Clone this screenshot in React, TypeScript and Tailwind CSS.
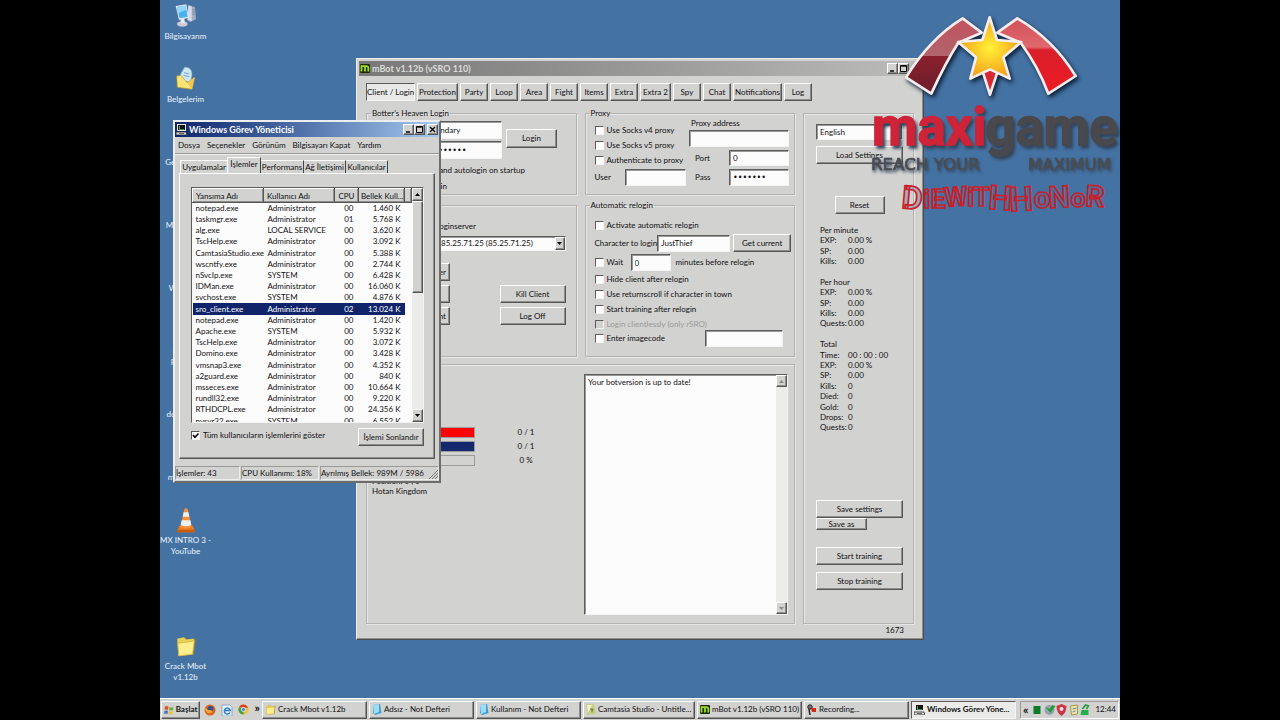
import type { ReactNode } from "react";
import clsx from "clsx";

const raised =
  "border border-t-white border-l-white border-r-[#555] border-b-[#555] bg-[#d2d2d0] shadow-[inset_-1px_-1px_0_#8e8e8c]";
const sunken =
  "border border-t-[#5c5c5c] border-l-[#5c5c5c] border-r-[#f4f4f4] border-b-[#f4f4f4]";
const field = `${sunken} min-w-0 bg-[#fdfcfd] px-[3px] outline-none shadow-[inset_1px_1px_0_#9a9a9a]`;
const group = "min-w-0 border border-[#b2b2b0] shadow-[inset_1px_1px_0_#e6e6e4,1px_1px_0_#e6e6e4]";

const processes = [
  ["notepad.exe", "Administrator", "00", "1.460 K"],
  ["taskmgr.exe", "Administrator", "01", "5.768 K"],
  ["alg.exe", "LOCAL SERVICE", "00", "3.620 K"],
  ["TscHelp.exe", "Administrator", "00", "3.092 K"],
  ["CamtasiaStudio.exe", "Administrator", "00", "5.388 K"],
  ["wscntfy.exe", "Administrator", "00", "2.744 K"],
  ["nSvcIp.exe", "SYSTEM", "00", "6.428 K"],
  ["IDMan.exe", "Administrator", "00", "16.060 K"],
  ["svchost.exe", "SYSTEM", "00", "4.876 K"],
  ["sro_client.exe", "Administrator", "02", "13.024 K"],
  ["notepad.exe", "Administrator", "00", "1.420 K"],
  ["Apache.exe", "SYSTEM", "00", "5.932 K"],
  ["TscHelp.exe", "Administrator", "00", "3.072 K"],
  ["Domino.exe", "Administrator", "00", "3.428 K"],
  ["vmsnap3.exe", "Administrator", "00", "4.352 K"],
  ["a2guard.exe", "Administrator", "00", "840 K"],
  ["msseces.exe", "Administrator", "00", "10.664 K"],
  ["rundll32.exe", "Administrator", "00", "9.220 K"],
  ["RTHDCPL.exe", "Administrator", "00", "24.356 K"],
  ["nvsvr32.exe", "SYSTEM", "00", "6.552 K"],
];

const botTabs = [
  { name: "Client / Login", width: "w-[49px]" },
  { name: "Protection", width: "w-[41px]" },
  { name: "Party", width: "w-[28px]" },
  { name: "Loop", width: "w-[28px]" },
  { name: "Area", width: "w-[28px]" },
  { name: "Fight", width: "w-[28px]" },
  { name: "Items", width: "w-[28px]" },
  { name: "Extra", width: "w-[28px]" },
  { name: "Extra 2", width: "w-[31px]" },
  { name: "Spy", width: "w-[28px]" },
  { name: "Chat", width: "w-[28px]" },
  { name: "Notifications", width: "w-[49px]" },
  { name: "Log", width: "w-[28px]" },
];

const stats = [
  ["Per minute", ""],
  ["EXP:", "0.00 %"],
  ["SP:", "0.00"],
  ["Kills:", "0.00"],
  ["", ""],
  ["Per hour", ""],
  ["EXP:", "0.00 %"],
  ["SP:", "0.00"],
  ["Kills:", "0.00"],
  ["Quests:", "0.00"],
  ["", ""],
  ["Total", ""],
  ["Time:", "00 : 00 : 00"],
  ["EXP:", "0.00 %"],
  ["SP:", "0.00"],
  ["Kills:", "0"],
  ["Died:", "0"],
  ["Gold:", "0"],
  ["Drops:", "0"],
  ["Quests:", "0"],
];

const Arrow = ({ up, muted }: { up?: boolean; muted?: boolean }) => (
  <svg viewBox="0 0 5 3" className={clsx("w-[5px] h-[3px]", up && "rotate-180", muted ? "fill-[#888]" : "fill-black")}>
    <path d="M0 0h5L2.5 3z" />
  </svg>
);

const Button = ({ children, className }: { children?: ReactNode; className?: string }) => (
  <button className={clsx(raised, "flex items-center justify-center whitespace-nowrap", className)}>{children}</button>
);

const Check = ({ label, checked, disabled }: { label: string; checked?: boolean; disabled?: boolean }) => (
  <label className={clsx("relative flex items-center gap-[3px] whitespace-nowrap", disabled && "text-[#9a9a98]")}>
    <input
      type="checkbox"
      defaultChecked={checked}
      disabled={disabled}
      className={clsx(sunken, "peer size-[9px] appearance-none shrink-0", disabled ? "bg-[#d2d2d0]" : "bg-white")}
    />
    <svg viewBox="0 0 9 9" className="hidden peer-checked:block absolute left-0 size-[9px] fill-none stroke-black">
      <path d="M2 4l2 2.3L7.5 2.5" strokeWidth="1.5" />
    </svg>
    {label}
  </label>
);

const Select = ({ label, value, className }: { label: string; value: string; className?: string }) => (
  <div className={clsx("relative", className)}>
    <select aria-label={label} className={clsx(field, "appearance-none w-full h-full")}>
      <option>{value}</option>
    </select>
    <span className={clsx(raised, "pointer-events-none absolute right-[1px] inset-y-[1px] w-[10px] flex items-center justify-center")}>
      <Arrow />
    </span>
  </div>
);

const MBotIcon = () => (
  <svg viewBox="0 0 10 9" className="w-[10px] h-[9px] shrink-0">
    <rect width="10" height="9" rx="1" fill="#1f2a08" />
    <path d="M1.5 7.5V2.2h5a1.8 1.8 0 0 1 1.8 1.8v3.5M5 2.5v5" fill="none" stroke="#9be022" strokeWidth="1.8" />
  </svg>
);

const MonitorIcon = () => (
  <svg viewBox="0 0 11 11" className="size-[11px] shrink-0">
    <path d="M1 0h9v7H1z" fill="#e8e8e4" />
    <path d="M2 1h7v5H2z" fill="#111" />
    <path d="M3 2h1v3h4v.8H3z" fill="#3fae62" />
    <path d="M0 8h10l1 3H0z" fill="#dcdcd8" stroke="#222" strokeWidth=".8" />
    <path d="M3 9.5h5" stroke="#444" strokeWidth=".8" />
  </svg>
);

const FolderIcon = ({ className }: { className: string }) => (
  <svg viewBox="0 0 20 20" className={className}>
    <path d="M3 4l6-2 2 2 7-1 1 2-2 13-13 1z" fill="#8b8140" />
    <path d="M2 3.5l6-1.5 2 2 7-.5.5 2-1.500 12-13 1.500z" fill="#ecd055" />
    <path d="M2.5 7.5l15-2-1.5 12-12.5 1.5z" fill="#fdf08c" stroke="#c9ae48" strokeWidth=".7" />
  </svg>
);

const ComputerIcon = () => (
  <svg viewBox="0 0 66 72" className="w-[22px] h-[24px]">
    <path d="M40 4l20 6 3 36-18 8-8-6z" fill="#a7abc4" />
    <path d="M40 4l10 3v45l-12-4z" fill="#d8dbea" />
    <path d="M52 16l8 2M52 23l8 1M52 30l8 1" stroke="#6f7494" strokeWidth="2" />
    <path d="M2 6l32-5 8 40-30 7z" fill="#dfe6f4" />
    <path d="M6 9l26-4 6 33-24 5z" fill="#47b0ef" />
    <path d="M6 9l26-4 2 12L9 28z" fill="#8fd6fa" />
    <ellipse cx="22" cy="60" rx="16" ry="8" fill="#cfc9d6" />
    <path d="M16 46l12-2 2 14H18z" fill="#e9e9f2" />
  </svg>
);

const DocumentsIcon = () => (
  <svg viewBox="0 0 60 78" className="w-[20px] h-[26px]">
    <path d="M26 4q20-2 22 20l-4 24-32-4 2-20z" fill="#cfe6f4" stroke="#8ab3cb" strokeWidth="2" />
    <path d="M24 20l16 4M22 28l18 4" stroke="#6ea9cf" strokeWidth="3" />
    <path d="M2 30l12-2 20 22 22-16-8 36-44-6z" fill="#f9e373" stroke="#b29637" strokeWidth="2" />
    <path d="M34 50l22-16-8 36z" fill="#efc94f" />
  </svg>
);

const ConeIcon = () => (
  <svg viewBox="0 0 54 78" className="w-[18px] h-[26px]">
    <path d="M6 56h42l6 20H0z" fill="#ee7d1a" />
    <path d="M22 6q5-4 10 0l12 54q-17 10-34 0z" fill="#f5923a" />
    <path d="M20 16h14l3 13H17zM14 40h26l3 14q-16 8-32 0z" fill="#eef0f0" />
    <path d="M0 76l3-8h48l3 8z" fill="#c95a0c" />
  </svg>
);

const NoteIcon = () => (
  <svg viewBox="0 0 10 11" className="w-[10px] h-[11px] shrink-0">
    <path d="M1 1l7-1 1.500 9L3 11 1 9z" fill="#3f9fd0" />
    <path d="M1 1l6-1v8l-5 2z" fill="#9fdcf3" />
  </svg>
);

const CamtasiaIcon = () => (
  <svg viewBox="0 0 10 11" className="w-[10px] h-[11px] shrink-0">
    <path d="M0 0h8l2 10-9 1z" fill="#c5cf86" />
    <path d="M1 1h5L2 9z" fill="#f2f4cf" />
    <path d="M4 4l4 1-2 4z" fill="#7f9448" />
  </svg>
);

const RecordIcon = () => (
  <svg viewBox="0 0 10 11" className="w-[10px] h-[11px] shrink-0">
    <circle cx="3" cy="3" r="2.200" fill="#777" stroke="#222" />
    <path d="M2 5l1 6" stroke="#222" strokeWidth="1.500" />
    <path d="M4 4h5v4H5z" fill="#cf2b1d" />
  </svg>
);

const desktopIcons: { label: string; icon?: ReactNode }[] = [
  { label: "Bilgisayarım", icon: <ComputerIcon /> },
  { label: "Belgelerim", icon: <DocumentsIcon /> },
  { label: "Genel Ağlar" },
  { label: "Mozilla Fox" },
  { label: "Windows Media" },
  { label: "Mx Bot Program" },
  { label: "downloads" },
  { label: "maxigame" },
  { label: "MX INTRO 3 - YouTube", icon: <ConeIcon /> },
  { label: "" },
  { label: "Crack Mbot v1.12b", icon: <FolderIcon className="size-[22px]" /> },
];

const DesktopIcons = () => (
  <ul className="grid auto-rows-[63px] w-[51px] pt-[2px] text-[#eef4fb]">
    {desktopIcons.map(({ label, icon }, i) => (
      <li key={i} className="flex flex-col items-center gap-[2px] text-center">
        <span className="h-[27px] shrink-0 flex items-center">{icon}</span>
        {label}
      </li>
    ))}
  </ul>
);

const WindowButtons = ({ close }: { close?: boolean }) => (
  <div className="ml-auto flex">
    <Button className="w-[11px] h-[11px]">
      <svg viewBox="0 0 9 9" className="size-[9px]"><path d="M2 7h4" stroke="#000" strokeWidth="1.500" /></svg>
    </Button>
    <Button className="w-[11px] h-[11px]">
      <svg viewBox="0 0 9 9" className="size-[9px]"><path d="M1.500 1.500h6v6h-6zM1.500 2.200h6" fill="none" stroke="#000" /></svg>
    </Button>
    {close && (
      <Button className="ml-[2px] w-[11px] h-[11px]">
        <svg viewBox="0 0 9 9" className="size-[9px]"><path d="M2 2l5 5M7 2l-5 5" stroke="#000" strokeWidth="1.400" /></svg>
      </Button>
    )}
  </div>
);

const LoginGroup = () => (
  <fieldset className={clsx(group, "h-[87px] px-[4px]")}>
    <legend className="px-[1px] leading-[10px]">Botter's Heaven Login</legend>
    <div className="mt-[3px] flex">
      <div className="w-[131px] flex flex-col gap-[2px]">
        <label className="flex items-center">
          <span className="w-[49px]">Username</span>
          <input className={clsx(field, "flex-1 h-[18px]")} defaultValue="Legendary" />
        </label>
        <label className="flex items-center">
          <span className="w-[49px]">Password</span>
          <input type="password" className={clsx(field, "flex-1 h-[18px] font-['DejaVu_Sans',sans-serif]")} defaultValue="123456789" />
        </label>
      </div>
      <Button className="ml-1 mt-[8px] w-[51px] h-[19px]">Login</Button>
    </div>
    <div className="mt-[3px] flex flex-col">
      <div className="h-[16px] w-[154px] flex items-center justify-end"><Check label="Save logins and autologin on startup" /></div>
      <div className="h-[16px] w-[76px] flex items-center justify-end"><Check label="Autorelogin" /></div>
    </div>
  </fieldset>
);

const ServerGroup = () => (
  <div className={clsx(group, "mt-[5px] h-[152px] px-[10px] pt-[15px]")}>
    <div className="w-[99px] text-right leading-[10px]">Select loginserver</div>
    <Select label="Loginserver" value="85.25.71.25 (85.25.71.25)" className="mt-[5px] ml-[60px] h-[15px]" />
    <div className="mt-[12px] grid grid-cols-[73px_66px] justify-between gap-y-1">
      <Button className="h-[18px] !justify-end pr-[3px]">Start loader</Button>
      <span />
      <Button className="h-[18px]">Start</Button>
      <Button className="h-[18px]">Kill Client</Button>
      <Button className="h-[18px] !justify-end pr-[3px]">Start client</Button>
      <Button className="h-[18px]">Log Off</Button>
    </div>
  </div>
);

const ProxyGroup = () => (
  <fieldset className={clsx(group, "h-[87px] pl-[9px] pr-[5px]")}>
    <legend className="-ml-[5px] px-[1px] leading-[10px]">Proxy</legend>
    <div className="flex justify-between">
      <div className="w-[91px] pt-[5px]">
        {["Use Socks v4 proxy", "Use Socks v5 proxy", "Authenticate to proxy"].map((label) => (
          <div key={label} className="h-[15px] flex items-center"><Check label={label} /></div>
        ))}
        <label className="mt-[1px] flex items-center justify-between">
          User
          <input className={clsx(field, "w-[61px] h-[17px]")} />
        </label>
      </div>
      <div className="w-[100px]">
        <label htmlFor="proxy-address" className="block px-[2px] leading-[10px]">Proxy address</label>
        <input id="proxy-address" className={clsx(field, "mt-[2px] block w-full h-[17px]")} />
        <label className="mt-[3px] pl-[6px] flex items-center justify-between">
          Port
          <input className={clsx(field, "w-[60px] h-[16px]")} defaultValue="0" />
        </label>
        <label className="mt-[3px] pl-[6px] flex items-center justify-between">
          Pass
          <input type="password" className={clsx(field, "w-[60px] h-[17px] font-['DejaVu_Sans',sans-serif]")} defaultValue="1234567" />
        </label>
      </div>
    </div>
  </fieldset>
);

const ReloginGroup = () => (
  <fieldset className={clsx(group, "h-[157px] pl-[9px] pr-[3px]")}>
    <legend className="-ml-[5px] px-[1px] leading-[10px]">Automatic relogin</legend>
    <div className="mt-[8px] h-[15px] flex items-center"><Check label="Activate automatic relogin" /></div>
    <div className="mt-[1px] flex items-center">
      <label className="flex flex-1 items-center justify-between whitespace-nowrap">
        Character to login
        <input className={clsx(field, "w-[73px] h-[17px]")} defaultValue="JustThief" />
      </label>
      <Button className="ml-[3px] w-[60px] h-[18px]">Get current</Button>
    </div>
    <div className="mt-[2px] flex items-center">
      <div className="w-[36px]"><Check label="Wait" /></div>
      <input id="wait" aria-label="Minutes to wait" className={clsx(field, "w-[40px] h-[17px]")} defaultValue="0" />
      <label htmlFor="wait" className="ml-[5px]">minutes before relogin</label>
    </div>
    <div className="mt-[1px] h-[15px] flex items-center"><Check label="Hide client after relogin" /></div>
    <div className="h-[15px] flex items-center"><Check label="Use returnscroll if character in town" /></div>
    <div className="h-[15px] flex items-center"><Check label="Start training after relogin" /></div>
    <div className="h-[14px] flex items-center"><Check label="Login clientlessly (only rSRO)" disabled /></div>
    <div className="h-[15px] flex items-center justify-between">
      <Check label="Enter imagecode" />
      <input aria-label="Imagecode" className={clsx(field, "mr-[8px] w-[78px] h-[17px]")} />
    </div>
  </fieldset>
);

const Bar = ({ color, text }: { color: string; text: string }) => (
  <div className="flex h-[14px] items-center">
    <div className={clsx("w-[103px] h-[11px] border border-[#9a9a98]", color)} />
    <span className="w-[102px] text-center">{text}</span>
  </div>
);

const LogGroup = () => (
  <div className={clsx(group, "mt-[7px] h-[260px] flex justify-between pl-[5px] pr-[6px] pt-[9px]")}>
    <div className="pt-[51px]">
      <Bar color="bg-[#fb0404]" text="0 / 1" />
      <Bar color="bg-[#14286e]" text="0 / 1" />
      <Bar color="bg-[#d2d2d0]" text="0 %" />
      <div className="mt-[9px] leading-[10px]">Position: 0 , 0</div>
      <div className="leading-[10px]">Hotan Kingdom</div>
    </div>
    <div className={clsx(sunken, "flex w-[204px] h-[241px] bg-[#fdfcfd] shadow-[inset_1px_1px_0_#9a9a9a]")}>
      <textarea
        aria-label="Messages"
        className="flex-1 resize-none overflow-hidden px-[3px] pt-[2px] leading-[11px] outline-none"
        defaultValue="Your botversion is up to date!"
      />
      <div className="flex w-[11px] flex-col justify-between bg-[#ececea]">
        <Button className="h-[12px]"><Arrow up muted /></Button>
        <Button className="h-[12px]"><Arrow muted /></Button>
      </div>
    </div>
  </div>
);

const SidePanel = () => (
  <div className={clsx(group, "mt-[5px] flex w-[111px] flex-col pl-[12px] pr-[10px] pt-[10px]")}>
    <Select label="Language" value="English" className="h-[16px]" />
    <Button className="mt-[6px] h-[18px]">Load Settings</Button>
    <Button className="mt-[32px] w-[50px] h-[18px] self-center">Reset</Button>
    <dl className="mt-[11px] grid h-[208px] auto-rows-fr pl-1">
      {stats.map(([name, value], i) => (
        <div key={i} className="flex items-center whitespace-nowrap">
          <dt className="w-[28px]">{name}</dt>
          <dd>{value}</dd>
        </div>
      ))}
    </dl>
    <Button className="mt-[67px] h-[18px]">Save settings</Button>
    <Button className="h-[12px] w-[51px]">Save as</Button>
    <Button className="mt-[17px] h-[18px]">Start training</Button>
    <Button className="mt-[7px] h-[18px]">Stop training</Button>
  </div>
);

const BotWindow = () => (
  <section className="absolute left-[196px] top-[58px] w-[568px] border border-t-[#eee] border-l-[#eee] border-r-[#4c4c4c] border-b-[#4c4c4c] bg-[#d2d2d0] p-[2px] shadow-[inset_-1px_-1px_0_#8e8e8c]">
    <header className="flex h-[15px] items-center gap-[2px] bg-linear-to-r from-[#787878] to-[#bcbcba] px-[1px] text-[9px] font-bold text-[#dcdcda]">
      <MBotIcon />
      <span>mBot v1.12b (vSRO 110)</span>
      <div className="ml-auto mr-[11px] flex font-normal"><WindowButtons /></div>
    </header>
    <div className="px-[7px]">
      <nav className="mt-[7px] flex gap-[2px]">
        {botTabs.map(({ name, width }, i) =>
          i === 0 ? (
            <button key={name} className={clsx(sunken, width, "h-[18px] whitespace-nowrap bg-[#e9e9e7]")}>{name}</button>
          ) : (
            <Button key={name} className={clsx("h-[18px]", width)}>{name}</Button>
          )
        )}
      </nav>
      <div className="mt-[7px] flex gap-2">
        <div className="flex-1">
          <div className="grid grid-cols-2 gap-x-2 gap-y-[5px]">
            <LoginGroup />
            <ProxyGroup />
            <ServerGroup />
            <ReloginGroup />
          </div>
          <LogGroup />
        </div>
        <SidePanel />
      </div>
      <footer className="pr-[10px] text-right leading-[13px]">1673</footer>
    </div>
  </section>
);

const ProcessTable = () => (
  <div className={clsx(sunken, "flex h-[236px] overflow-hidden bg-[#fdfcfd]")}>
    <div className="flex-1">
      <table className="w-full table-fixed">
        <thead>
          <tr className="h-[14px] text-left leading-[12px] whitespace-nowrap">
            <th className={clsx(raised, "w-[71px] pl-[3px] font-normal")}>Yansıma Adı</th>
            <th className={clsx(raised, "w-[71px] pl-[3px] font-normal")}>Kullanıcı Adı</th>
            <th className={clsx(raised, "w-[24px] text-center font-normal")}>CPU</th>
            <th className={clsx(raised, "w-[46px] pl-[2px] font-normal")}>Bellek Kull...</th>
            <th className={raised} />
          </tr>
        </thead>
        <tbody>
          {processes.map(([name, user, cpu, memory], i) => (
            <tr key={i} className="h-[11px] leading-[11px] whitespace-nowrap nth-[5n]:leading-[12px]">
              <td className={clsx("pl-[3px]", i === 9 && "bg-[#10246a] text-white")}>{name}</td>
              <td className={clsx("pl-[4px]", i === 9 && "bg-[#10246a] text-white")}>{user}</td>
              <td className={clsx("pr-[5px] text-right", i === 9 && "bg-[#10246a] text-white")}>{cpu}</td>
              <td className={clsx("pr-1 text-right", i === 9 && "bg-[#10246a] text-white")}>{memory}</td>
              <td />
            </tr>
          ))}
        </tbody>
      </table>
    </div>
    <div className="flex w-[11px] flex-col bg-[#ebebe9]">
      <Button className="h-[13px] shrink-0"><Arrow up /></Button>
      <div className={clsx(raised, "h-[92px]")} />
      <Button className="mt-auto h-[13px] shrink-0"><Arrow /></Button>
    </div>
  </div>
);

const TaskManager = () => (
  <section className="absolute left-[13px] top-[120px] w-[268px] border-2 border-t-[#eee] border-l-[#eee] border-r-[#6c6c6a] border-b-[#6c6c6a] bg-[#d2d2d0]">
    <header className="flex h-[15px] items-center gap-[2px] bg-linear-to-r from-[#10246a] to-[#a6caf0] px-[1px] text-[9px] font-bold text-white">
      <MonitorIcon />
      <span>Windows Görev Yöneticisi</span>
      <WindowButtons close />
    </header>
    <nav className="flex h-[17px] items-center gap-[7px] border-b border-[#9a9a98] pl-[3px] shadow-[0_1px_0_#eee]">
      {["Dosya", "Seçenekler", "Görünüm", "Bilgisayarı Kapat", "Yardım"].map((item) => (
        <button key={item} className="whitespace-nowrap">{item}</button>
      ))}
    </nav>
    <div className="px-1 pt-[3px]">
      <div className="flex h-[16px] items-end whitespace-nowrap pl-[1px]">
        <button className="h-[13px] w-[47px] border-l border-t border-white">Uygulamalar</button>
        <button className="h-[16px] w-[34px] border border-b-0 border-t-white border-l-white border-r-[#444] pb-[3px]">İşlemler</button>
        <button className="h-[13px] w-[43px] border-r border-t border-t-white border-r-[#444]">Performans</button>
        <button className="h-[13px] w-[42px] border-r border-t border-t-white border-r-[#444]">Ağ İletişimi</button>
        <button className="h-[13px] w-[42px] border-r border-t border-t-white border-r-[#444]">Kullanıcılar</button>
      </div>
      <div className={clsx(raised, "h-[286px] pl-[11px] pr-[10px] pt-[13px]")}>
        <ProcessTable />
        <div className="mt-[5px] flex items-start justify-between">
          <div className="pt-[2px]"><Check label="Tüm kullanıcıların işlemlerini göster" checked /></div>
          <Button className="w-[66px] h-[18px]">İşlemi Sonlandır</Button>
        </div>
      </div>
    </div>
    <footer className="mt-[7px] grid grid-cols-[65px_78px_1fr] gap-[1px] pb-[1px] leading-[12px] whitespace-nowrap">
      {["İşlemler: 43", "CPU Kullanımı: 18%", "Ayrılmış Bellek: 989M / 5986"].map((text) => (
        <div key={text} className="relative border border-t-[#9a9a98] border-l-[#9a9a98] border-r-[#eee] border-b-[#eee]">
          {text}
          {text.startsWith("Ayr") && (
            <svg viewBox="0 0 9 9" className="absolute bottom-0 right-0 size-[9px] stroke-[#777]">
              <path d="M0 9L9 0M3 9l6-6M6 9l3-3" />
            </svg>
          )}
        </div>
      ))}
    </footer>
  </section>
);

const nickname = [
  { char: "D", x: 303, y: 624, size: 96, turn: "rotate(5 303 624)" },
  { char: "i", x: 370, y: 624, size: 80 },
  { char: "E", x: 392, y: 624, size: 80 },
  { char: "W", x: 435, y: 620, size: 80, turn: "rotate(-4 435 620)" },
  { char: "i", x: 502, y: 618, size: 80 },
  { char: "T", x: 520, y: 618, size: 80 },
  { char: "H", x: 564, y: 626, size: 100, turn: "rotate(4 564 626)" },
  { char: "H", x: 630, y: 634, size: 100, turn: "rotate(-3 630 634)" },
  { char: "o", x: 702, y: 624, size: 90 },
  { char: "N", x: 748, y: 624, size: 90, turn: "rotate(-3 748 624)" },
  { char: "o", x: 812, y: 622, size: 80 },
  { char: "R", x: 856, y: 618, size: 88, turn: "rotate(3 856 618)" },
];

const Watermark = () => (
  <svg viewBox="198 30 762 621" className="pointer-events-none absolute left-[706px] top-[10px] h-[207px] w-[254px]">
    <defs>
      <radialGradient id="gold">
        <stop offset="0" stopColor="#fff23a" />
        <stop offset="1" stopColor="#f7a018" />
      </radialGradient>
      <linearGradient id="dark" x1="0" y1="0" x2="0" y2="1">
        <stop offset="0" stopColor="#c4525d" />
        <stop offset=".5" stopColor="#b0656d" />
        <stop offset=".5" stopColor="#8a1f2c" />
        <stop offset="1" stopColor="#6d1f2c" />
      </linearGradient>
      <linearGradient id="bright" x1="0" y1="0" x2="0" y2="1">
        <stop offset="0" stopColor="#d2505a" />
        <stop offset=".38" stopColor="#e0686e" />
        <stop offset=".42" stopColor="#d81f2a" />
        <stop offset="1" stopColor="#ee1b24" />
      </linearGradient>
    </defs>
    <g className="drop-shadow-[6px_8px_6px_#0c2038]" stroke="#f6eeee" strokeWidth="8" strokeLinejoin="round">
      <path d="M318 232Q390 115 488 55L545 98L475 128Q435 190 394 281Z" fill="url(#dark)" />
      <path d="M592 98L652 55Q760 118 827 228L745 281Q715 200 662 128Z" fill="url(#bright)" />
      <path d="M545 205L570 284L596 205Z" fill="#d52a34" />
      <path d="M569 52L591 120L664 126L610 172L629 236L570 208L511 236L528 172L474 126L547 120Z" fill="url(#gold)" />
    </g>
    <g className="drop-shadow-[7px_9px_5px_#33445a] font-['Roboto',sans-serif] font-bold" fontSize="158">
      <text x="216" y="436" fill="#cf2338" stroke="#cf2338" strokeWidth="4">maxi</text>
      <text x="556" y="436" fill="#49494d" stroke="#49494d" strokeWidth="4">game</text>
    </g>
    <g className="drop-shadow-[4px_6px_4px_#33445a] font-['DejaVu_Sans',sans-serif]" fontSize="50" fill="#4a4d52" stroke="#4a4d52" strokeWidth="2">
      <text x="213" y="510">REACH YOUR</text>
      <text x="684" y="510">MAXIMUM</text>
    </g>
    <g className="font-['Roboto',sans-serif] font-bold" fill="#5b6585" fillOpacity=".35" stroke="#c8202c" strokeWidth="5">
      {nickname.map(({ char, x, y, size, turn }) => (
        <text key={x} x={x} y={y} fontSize={size} transform={turn}>{char}</text>
      ))}
    </g>
  </svg>
);

const tasks = [
  { name: "Crack Mbot v1.12b", icon: <FolderIcon className="size-[11px] shrink-0" /> },
  { name: "Adsız - Not Defteri", icon: <NoteIcon /> },
  { name: "Kullanım - Not Defteri", icon: <NoteIcon /> },
  { name: "Camtasia Studio - Untitle...", icon: <CamtasiaIcon /> },
  { name: "mBot v1.12b (vSRO 110)", icon: <MBotIcon /> },
  { name: "Recording...", icon: <RecordIcon /> },
  { name: "Windows Görev Yöne...", icon: <MonitorIcon />, active: true },
];

const Taskbar = () => (
  <footer className="flex h-[22px] shrink-0 items-center border-t border-white bg-[#d2d2d0] px-[1px] whitespace-nowrap">
    <Button className="w-[39px] h-[18px] gap-[2px] font-bold">
      <svg viewBox="0 0 10 10" className="size-[10px] shrink-0">
        <path d="M1 1.500q2-1 3.500 0L4 5Q2 4 .5 5z" fill="#e0532a" />
        <path d="M5.500 2q2 1 4 0L9 5q-2 1-4 0z" fill="#6cb33c" />
        <path d="M.5 6Q2 5 4 6l-.5 3Q2 8 0 9z" fill="#3c78d0" />
        <path d="M5 6q2 1 4 0l-.5 3q-2 1-4 0z" fill="#f0c030" />
      </svg>
      Başlat
    </Button>
    <div className="flex w-[62px] items-center justify-between pl-1">
      <svg viewBox="0 0 12 12" className="size-[12px]">
        <circle cx="6" cy="6" r="5.500" fill="#d9661c" />
        <circle cx="6.500" cy="5" r="3" fill="#354f92" />
        <path d="M1 3q2 4 5 3l3 1q-2 3-5 2-3-1-3-6z" fill="#f3a530" />
      </svg>
      <svg viewBox="0 0 12 12" className="size-[12px]">
        <path d="M1 1h8l2 2v9H1z" fill="#e8f1f8" stroke="#6f93b4" strokeWidth=".7" />
        <path d="M9 8.500A3 3 0 1 1 9.300 6.500H4" fill="none" stroke="#2c7fc7" strokeWidth="1.500" />
      </svg>
      <svg viewBox="0 0 12 12" className="size-[11px]">
        <circle cx="6" cy="6" r="5.500" fill="#efc32b" />
        <path d="M1.200 3.200A5.500 5.500 0 0 1 11 4H6z" fill="#d93a2b" />
        <path d="M1.200 3.200A5.500 5.500 0 0 0 6 11.500L6 6z" fill="#3fa047" />
        <circle cx="6" cy="6" r="2.300" fill="#4a88d8" stroke="#fff" strokeWidth=".8" />
      </svg>
      <span className="pb-[3px] pr-[2px] text-[12px] font-bold leading-[12px]">»</span>
    </div>
    <div className="grid min-w-0 flex-1 grid-cols-[1fr_1fr_1fr_112px_1fr_1fr_1fr] gap-[2px]">
      {tasks.map(({ name, icon, active }) => (
        <button
          key={name}
          className={clsx(
            "flex h-[18px] min-w-0 items-center gap-[2px] overflow-hidden pl-[2px] text-left",
            active ? `${sunken} bg-[#ebebe9] font-bold` : raised
          )}
        >
          {icon}
          {name}
        </button>
      ))}
    </div>
    <div className="ml-1 flex h-[18px] w-[99px] items-center gap-[2px] border border-t-[#9a9a98] border-l-[#9a9a98] border-r-white border-b-white px-[2px]">
      <span className="text-[12px] font-bold">«</span>
      <svg viewBox="0 0 58 12" className="h-[12px] min-w-0 flex-1">
        <path d="M2 2h7v8H2z" fill="#0b7a2b" />
        <circle cx="18" cy="6" r="5" fill="#9aa3aa" />
        <path d="M14 3l5 6 5-7-3-1-3 4z" fill="#279a3c" />
        <path d="M25 2l5-2 5 2q0 7-5 10-5-3-5-10z" fill="#c93648" />
        <circle cx="30" cy="5" r="2" fill="#f5dfe0" />
        <path d="M39 2l7-1v9l-6 1z" fill="#f1e7a4" stroke="#a3964f" />
        <path d="M41 5l4-1M41 8l3-1" stroke="#5b7fb5" />
        <path d="M50 6h7v5h-8z" fill="#23b04b" />
        <path d="M51 5l3-4 3 1-2 3" fill="none" stroke="#1c9c3c" strokeWidth="1.500" />
      </svg>
      <time className="ml-[2px]">12:44</time>
    </div>
  </footer>
);

const App = () => {
  return (
    <div className="min-h-screen bg-black font-['Lato','Liberation_Sans',sans-serif] text-[8px] leading-[11px] text-[#101010]">
      <div className="mx-auto flex h-screen w-3/4 flex-col overflow-hidden bg-[#4472a3]">
        <main className="relative min-h-0 flex-1">
          <DesktopIcons />
          <BotWindow />
          <TaskManager />
          <Watermark />
        </main>
        <Taskbar />
      </div>
    </div>
  );
};

export default App;
